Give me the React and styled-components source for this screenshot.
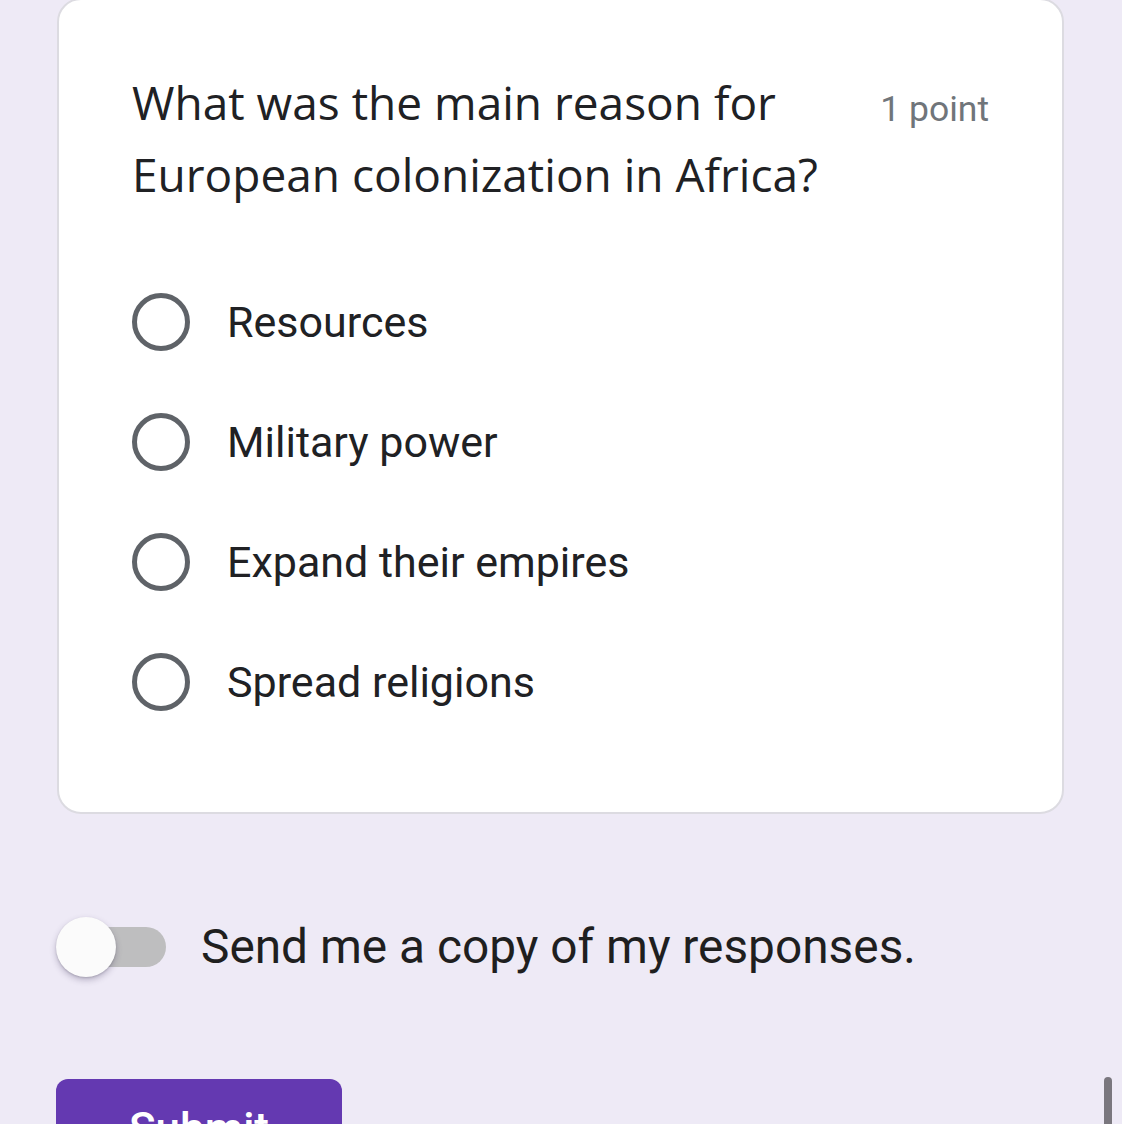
import React from "react";
import styled, { createGlobalStyle } from "styled-components";

const Global = createGlobalStyle`
  html, body { margin: 0; padding: 0; overflow: hidden; }
  body { background: #eeeaf6; font-family: Roboto, "Liberation Sans", sans-serif; }
`;

const Page = styled.div`
  position: relative;
  height: 1124px;
  overflow: hidden;
  padding: 0 58px 0 57px;
  box-sizing: border-box;
`;

const Card = styled.section`
  margin-top: -2px;
  width: 1007px;
  box-sizing: border-box;
  background: #ffffff;
  border: 2px solid #dcdbe1;
  border-radius: 24px;
  padding: 66px 73px 70px 73px;
`;

const Header = styled.div`
  display: flex;
  align-items: flex-start;
  justify-content: space-between;
`;

const Question = styled.h2`
  margin: 0;
  max-width: 770px;
  font-family: "Open Sans", sans-serif;
  font-weight: 400;
  font-size: 46px;
  line-height: 72px;
  color: #202124;
`;

const Points = styled.div`
  font-family: Roboto, sans-serif;
  font-size: 35.5px;
  line-height: 72px;
  color: #70757a;
  white-space: nowrap;
  padding-top: 7px;
`;

const Options = styled.div`
  margin-top: 52px;
  display: flex;
  flex-direction: column;
`;

const Option = styled.label`
  display: flex;
  align-items: center;
  gap: 37px;
  height: 120px;
  font-family: Roboto, sans-serif;
  font-size: 43px;
  color: #202124;
`;

const Radio = styled.span`
  width: 58px;
  height: 58px;
  box-sizing: border-box;
  border: 5px solid #5f6368;
  border-radius: 50%;
  flex-shrink: 0;
`;

const CopyRow = styled.div`
  margin-top: 103px;
  display: flex;
  align-items: center;
  gap: 35px;
  height: 60px;
  margin-left: -1px;
`;

const Toggle = styled.span`
  position: relative;
  width: 110px;
  height: 60px;
  display: flex;
  align-items: center;
  justify-content: flex-end;
`;

const Track = styled.span`
  width: 96px;
  height: 40px;
  border-radius: 20px;
  background: #bebebf;
`;

const Thumb = styled.span`
  position: absolute;
  left: 0;
  top: 0;
  width: 60px;
  height: 60px;
  border-radius: 50%;
  background: #fbfbfb;
  box-shadow: 0 3px 6px rgba(60, 50, 90, 0.3), 0 1px 2px rgba(0,0,0,0.15);
`;

const CopyText = styled.span`
  font-family: Roboto, sans-serif;
  font-size: 47.8px;
  color: #1f1f1f;
`;

const Submit = styled.button`
  margin-top: 102px;
  margin-left: -1px;
  width: 286px;
  height: 100px;
  border: none;
  border-radius: 12px;
  background: #6439b1;
  color: #ffffff;
  font-family: Roboto, sans-serif;
  font-weight: 500;
  font-size: 44px;
  display: block;
`;

const ScrollThumb = styled.div`
  position: absolute;
  left: 1104px;
  top: 1077px;
  width: 8px;
  height: 80px;
  border-radius: 4px;
  background: #7a777e;
`;

const options = ["Resources", "Military power", "Expand their empires", "Spread religions"];

export default function App() {
  return (
    <>
      <Global />
      <Page>
        <Card>
          <Header>
            <Question>What was the main reason for European colonization in Africa?</Question>
            <Points>1 point</Points>
          </Header>
          <Options>
            {options.map((o) => (
              <Option key={o}>
                <Radio />
                {o}
              </Option>
            ))}
          </Options>
        </Card>
        <CopyRow>
          <Toggle>
            <Track />
            <Thumb />
          </Toggle>
          <CopyText>Send me a copy of my responses.</CopyText>
        </CopyRow>
        <Submit>Submit</Submit>
        <ScrollThumb />
      </Page>
    </>
  );
}
